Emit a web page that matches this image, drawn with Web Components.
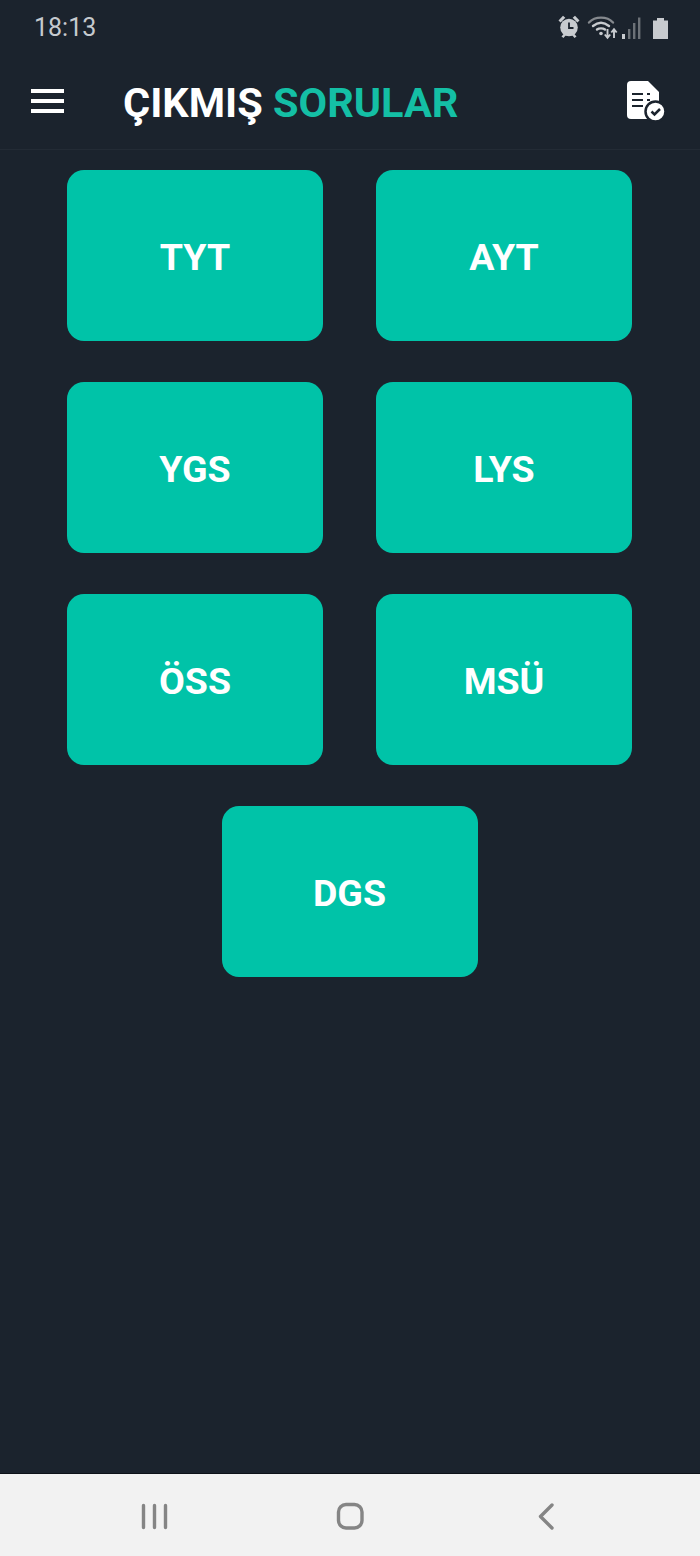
<!DOCTYPE html>
<html lang="tr"><head><meta charset="utf-8"><title>Çıkmış Sorular</title>
<style>
html,body{margin:0;padding:0;background:#1b232d}
body{width:700px;height:1556px;font-family:Roboto,"Liberation Sans",sans-serif;overflow:hidden}
app-shell{display:flex}
</style></head><body>
<app-shell>
  <status-bar slot="status"></status-bar>
  <top-bar slot="top"></top-bar>
  <exam-grid slot="main">
    <exam-button>TYT</exam-button><exam-button>AYT</exam-button>
    <exam-button>YGS</exam-button><exam-button>LYS</exam-button>
    <exam-button>ÖSS</exam-button><exam-button>MSÜ</exam-button>
    <exam-button>DGS</exam-button>
  </exam-grid>
  <nav-bar slot="nav"></nav-bar>
</app-shell>
<script>
function def(name,html){
  customElements.define(name,class extends HTMLElement{
    constructor(){super();this.attachShadow({mode:'open'}).innerHTML=html;}
  });
}
def('app-shell',`<style>:host{display:flex;flex-direction:column;width:700px;height:1556px;background:#1b232d}
main{flex:1;min-height:0}</style><slot name="status"></slot><slot name="top"></slot><main><slot name="main"></slot></main><slot name="nav"></slot>`);

def('status-bar',`<style>:host{display:flex;align-items:center;height:54px;padding:0 30px 0 34px;box-sizing:border-box;color:#c6cacf;font:400 25px Roboto,sans-serif}
.t{flex:1}.i{display:flex;align-items:center;margin-bottom:1px}svg{display:block}</style>
<span class="t">18:13</span>
<span class="i"><svg width="112" height="26" viewBox="0 0 112 26">
<g fill="#c8cbcf">
<circle cx="11" cy="13.500" r="8.800"/>
<path d="M0.500 6.500 5 1.800 7.300 3.800 2.600 8.500zM21.500 6.500 17 1.800 14.700 3.800 19.400 8.500z"/>
<path d="M3.500 22.500 6 19.500 8 21 5.500 24zM18.500 22.500 16 19.500 14 21 16.500 24z"/>
</g>
<path d="M11 8.500v5.500h4.500" fill="none" stroke="#1b232d" stroke-width="1.800"/>
<g fill="none" stroke-width="2.400" stroke-linecap="round">
<path d="M31 8.500C37 2 49 2 55 8.500" stroke="#85898e"/>
<path d="M35 12C40 8 46 8 51 12" stroke="#c8cbcf"/>
<path d="M39 15.500C41 14 45 14 47 15.500" stroke="#c8cbcf"/>
</g>
<circle cx="43" cy="19.500" r="1.800" fill="#c8cbcf"/>
<path d="M49.500 15v8.500M46.800 20.500 49.500 23.800 52.200 20.500" fill="none" stroke="#c8cbcf" stroke-width="1.900"/>
<path d="M56 24v-8.500M53.300 18.500 56 15.200 58.700 18.500" fill="none" stroke="#c8cbcf" stroke-width="1.900"/>
<rect x="64" y="20" width="3" height="5" fill="#c8cbcf"/>
<rect x="70" y="15" width="2.400" height="10" fill="#6c7177"/>
<rect x="75" y="9" width="2.400" height="16" fill="#6c7177"/>
<rect x="80" y="3.500" width="2.400" height="21.500" fill="#6c7177"/>
<path d="M95 6.500h4v-2.500h7v2.500h4v18.500h-15z" fill="#c8cbcf"/>
</svg></span>`);

def('top-bar',`<style>:host{display:flex;align-items:center;height:96px;padding-bottom:1px;box-sizing:border-box;border-bottom:1px solid #232b35;background:#1b232d}
.m{width:33px;margin-left:31px;display:flex;flex-direction:column;gap:6.500px}
.m i{display:block;height:3.500px;background:#fff}
h1{margin:4px 0 0 59px;flex:1;font:700 41.500px/1 Roboto,sans-serif;color:#fff;white-space:nowrap}
h1 span{color:#14bfa5}
svg{display:block;margin:2px 32px 0 0}</style>
<div class="m"><i></i><i></i><i></i></div>
<h1>ÇIKMIŞ <span>SORULAR</span></h1>
<svg width="42" height="44" viewBox="0 0 42 44">
<path d="M5 1h17l11 11v23a4 4 0 0 1-4 4H5a4 4 0 0 1-4-4V5a4 4 0 0 1 4-4z" fill="#fff"/>
<path d="M6 14h11M6 20h11M6 26h11M21 14h3M21 20h3" stroke="#1b232d" stroke-width="2"/>
<circle cx="29.500" cy="31.500" r="10" fill="#fff" stroke="#1b232d" stroke-width="2.500"/>
<path d="M25.500 31.500l3 3 5.500-5.500" fill="none" stroke="#1b232d" stroke-width="2.500"/>
</svg>`);

def('exam-grid',`<style>:host{display:grid;grid-template-columns:256px 256px;justify-content:start;column-gap:53px;row-gap:41px;padding:20px 0 0 67px}
::slotted(:last-child){grid-column:1/-1;justify-self:center}</style><slot></slot>`);

def('exam-button',`<style>:host{display:flex;align-items:center;justify-content:center;width:256px;height:171px;border-radius:17px;background:#00c3a8;color:#fff;font:700 37.500px/1 Roboto,sans-serif}
span{position:relative;top:2px}</style><span><slot></slot></span>`);

def('nav-bar',`<style>:host{display:block;height:83px;box-sizing:border-box;border-top:1px solid #0d1218;background:#f2f2f2}
svg{display:block}</style>
<svg width="700" height="82" viewBox="0 0 700 82">
<path d="M143.500 31.500v22M154.500 31.500v22M165.500 31.500v22" stroke="#858585" stroke-width="3.400" stroke-linecap="round" fill="none"/>
<rect x="338.500" y="30.500" width="23.500" height="23.500" rx="7.500" fill="none" stroke="#858585" stroke-width="3.400"/>
<path d="M552 31 540.500 42.500 552 54" fill="none" stroke="#858585" stroke-width="3.400" stroke-linecap="round" stroke-linejoin="round"/>
</svg>`);
</script>
</body></html>
